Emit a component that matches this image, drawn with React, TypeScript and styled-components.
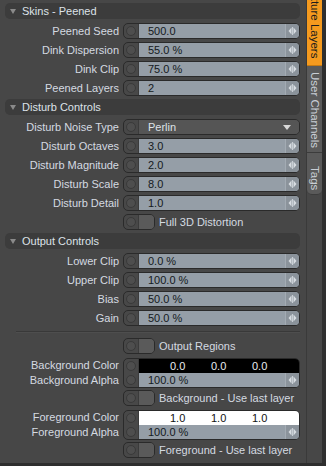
import React from "react";
import styled, { createGlobalStyle } from "styled-components";

const GlobalStyle = createGlobalStyle`
  html, body {
    margin: 0;
    padding: 0;
    background: #474747;
  }
  body {
    font-family: "Liberation Sans", Arial, sans-serif;
    font-size: 11px;
  }
`;

const Frame = styled.div`
  width: 326px;
  height: 466px;
  display: flex;
  background: #474747;
  overflow: hidden;
  box-sizing: border-box;
  border-bottom: 3px solid #2e2e2e;
`;

const Panel = styled.div`
  width: 306px;
  padding: 3px 6px 0 5px;
  box-sizing: border-box;
  display: flex;
  flex-direction: column;
`;

const Header = styled.div<{ $first?: boolean }>`
  height: 16px;
  border-radius: 5px;
  background: #3c3c3c;
  display: flex;
  align-items: center;
  gap: 6px;
  padding-left: 5px;
  color: #dde2e8;
  margin-top: ${(p) => (p.$first ? "0" : "3px")};
  margin-bottom: 1px;
`;

const Arrow = styled.span`
  width: 0;
  height: 0;
  border-left: 3px solid transparent;
  border-right: 3px solid transparent;
  border-top: 5px solid #8a8a8a;
`;

const Row = styled.div<{ $gap?: number }>`
  display: grid;
  grid-template-columns: 114px 177px;
  column-gap: 4px;
  align-items: center;
  margin-top: ${(p) => p.$gap ?? 3}px;
`;

const Label = styled.div<{ $h?: number }>`
  text-align: right;
  color: #d5dae1;
  white-space: nowrap;
  height: ${(p) => p.$h ?? 16}px;
  line-height: ${(p) => p.$h ?? 16}px;
`;

const LabelStack = styled.div`
  display: flex;
  flex-direction: column;
`;

const Control = styled.div<{ $h?: number }>`
  display: flex;
  height: ${(p) => p.$h ?? 16}px;
  border: 1px solid #2a2a2a;
  border-radius: 5px;
  overflow: hidden;
  box-sizing: border-box;
  background: #484848;
`;

const KeySlot = styled.div`
  width: 14px;
  display: flex;
  flex-direction: column;
  border-right: 1px solid #3b3b3b;
`;

const KeyCell = styled.div`
  flex: 1;
  display: flex;
  align-items: center;
  justify-content: center;
`;

const KeyDot = styled.span`
  width: 10px;
  height: 10px;
  border-radius: 50%;
  border: 1px solid #3a3a3a;
  background: #4e4e4e;
  box-sizing: border-box;
`;

const Fields = styled.div`
  flex: 1;
  display: flex;
  flex-direction: column;
`;

const Value = styled.div`
  flex: 1;
  display: flex;
  align-items: center;
  background: #959ea7;
  color: #141920;
  padding-left: 9px;
`;

const ValueText = styled.span`
  flex: 1;
`;

const Spinner = styled.div`
  width: 13px;
  height: 100%;
  display: flex;
  align-items: center;
  justify-content: center;
  background: #8b939b;
  border-left: 1px solid #a3abb3;
`;

const Dropdown = styled.div`
  flex: 1;
  display: flex;
  align-items: center;
  justify-content: space-between;
  background: #555555;
  color: #dfe3e8;
  padding: 0 8px 0 9px;
`;

const DropArrow = styled.span`
  width: 0;
  height: 0;
  border-left: 4px solid transparent;
  border-right: 4px solid transparent;
  border-top: 5px solid #d8d8d8;
`;

const ColorValues = styled.div<{ $bg: string; $fg: string }>`
  flex: 1;
  display: grid;
  grid-template-columns: 41px 41px 41px;
  padding-left: 31px;
  align-items: center;
  background: ${(p) => p.$bg};
  color: ${(p) => p.$fg};
`;

const ToggleLine = styled.div`
  display: flex;
  align-items: center;
  gap: 4px;
  color: #d5dae1;
  white-space: nowrap;
`;

const Toggle = styled.div`
  width: 32px;
  height: 16px;
  display: flex;
  border: 1px solid #2a2a2a;
  border-radius: 5px;
  overflow: hidden;
  box-sizing: border-box;
  background: #484848;
`;

const ToggleKnob = styled.div`
  flex: 1;
  background: #5a5a5a;
`;

const Separator = styled.div`
  height: 1px;
  margin: 5px 0 0 11px;
  background: #393939;
  border-bottom: 1px solid #4e4e4e;
`;

const TabStrip = styled.div`
  width: 16px;
  display: flex;
  flex-direction: column;
  border-left: 1px solid #3a3a3a;
`;

const Tab = styled.div<{ $active?: boolean; $h: number; $last?: boolean }>`
  height: ${(p) => p.$h}px;
  width: 15px;
  display: flex;
  flex-direction: column;
  justify-content: flex-end;
  align-items: center;
  overflow: hidden;
  box-sizing: border-box;
  padding-bottom: ${(p) => (p.$active ? 7 : 4)}px;
  background: ${(p) => (p.$active ? "#f59a1e" : "#5a5a5a")};
  color: ${(p) => (p.$active ? "#1c1c1c" : "#c9ced5")};
  border-bottom: 1px solid ${(p) => (p.$active ? "#c77a12" : "#3c3c3c")};
  border-radius: ${(p) => (p.$last ? "0 0 5px 5px" : "0")};
`;

const TabText = styled.span`
  writing-mode: vertical-rl;
  white-space: nowrap;
  font-size: 11.5px;
  flex-shrink: 0;
`;

const RightEdge = styled.div`
  width: 4px;
  background: #2f2f2f;
`;

function Key() {
  return (
    <KeyCell>
      <KeyDot />
    </KeyCell>
  );
}

function SpinIcon() {
  return (
    <svg width="9" height="8" viewBox="0 0 9 8">
      <path d="M3.5 0.5 L0.5 4 L3.5 7.5 Z" fill="#d8dde2" />
      <path d="M5.5 0.5 L8.5 4 L5.5 7.5 Z" fill="#d8dde2" />
      <rect x="4.1" y="0" width="0.8" height="8" fill="#d8dde2" />
    </svg>
  );
}

function NumberRow({ label, value }: { label: string; value: string }) {
  return (
    <Row>
      <Label>{label}</Label>
      <Control>
        <KeySlot>
          <Key />
        </KeySlot>
        <Value>
          <ValueText>{value}</ValueText>
          <Spinner>
            <SpinIcon />
          </Spinner>
        </Value>
      </Control>
    </Row>
  );
}

function ToggleRow({ label, gap }: { label: string; gap?: number }) {
  return (
    <Row $gap={gap}>
      <div />
      <ToggleLine>
        <Toggle>
          <KeySlot>
            <Key />
          </KeySlot>
          <ToggleKnob />
        </Toggle>
        {label}
      </ToggleLine>
    </Row>
  );
}

function ColorRow({ name, bg, fg, v }: { name: string; bg: string; fg: string; v: string }) {
  return (
    <Row $gap={4}>
      <LabelStack>
        <Label $h={15}>{name} Color</Label>
        <Label $h={15}>{name} Alpha</Label>
      </LabelStack>
      <Control $h={30}>
        <KeySlot>
          <Key />
          <Key />
        </KeySlot>
        <Fields>
          <ColorValues $bg={bg} $fg={fg}>
            <span>{v}</span>
            <span>{v}</span>
            <span>{v}</span>
          </ColorValues>
          <Value>
            <ValueText>100.0 %</ValueText>
            <Spinner>
              <SpinIcon />
            </Spinner>
          </Value>
        </Fields>
      </Control>
    </Row>
  );
}

function SectionHeader({ title, first }: { title: string; first?: boolean }) {
  return (
    <Header $first={first}>
      <Arrow />
      {title}
    </Header>
  );
}

export default function App() {
  return (
    <>
      <GlobalStyle />
      <Frame>
        <Panel>
          <SectionHeader title="Skins - Peened" first />
          <NumberRow label="Peened Seed" value="500.0" />
          <NumberRow label="Dink Dispersion" value="55.0 %" />
          <NumberRow label="Dink Clip" value="75.0 %" />
          <NumberRow label="Peened Layers" value="2" />

          <SectionHeader title="Disturb Controls" />
          <Row>
            <Label>Disturb Noise Type</Label>
            <Control>
              <KeySlot>
                <Key />
              </KeySlot>
              <Dropdown>
                Perlin
                <DropArrow />
              </Dropdown>
            </Control>
          </Row>
          <NumberRow label="Disturb Octaves" value="3.0" />
          <NumberRow label="Disturb Magnitude" value="2.0" />
          <NumberRow label="Disturb Scale" value="8.0" />
          <NumberRow label="Disturb Detail" value="1.0" />
          <ToggleRow label="Full 3D Distortion" />

          <SectionHeader title="Output Controls" />
          <NumberRow label="Lower Clip" value="0.0 %" />
          <NumberRow label="Upper Clip" value="100.0 %" />
          <NumberRow label="Bias" value="50.0 %" />
          <NumberRow label="Gain" value="50.0 %" />
          <Separator />
          <ToggleRow label="Output Regions" gap={5} />
          <ColorRow name="Background" bg="#000000" fg="#e8ecf0" v="0.0" />
          <ToggleRow label="Background - Use last layer" gap={2} />
          <ColorRow name="Foreground" bg="#ffffff" fg="#111111" v="1.0" />
          <ToggleRow label="Foreground - Use last layer" gap={2} />
        </Panel>
        <TabStrip>
          <Tab $active $h={66}>
            <TabText>Texture Layers</TabText>
          </Tab>
          <Tab $h={87}>
            <TabText>User Channels</TabText>
          </Tab>
          <Tab $h={42} $last>
            <TabText>Tags</TabText>
          </Tab>
        </TabStrip>
        <RightEdge />
      </Frame>
    </>
  );
}
